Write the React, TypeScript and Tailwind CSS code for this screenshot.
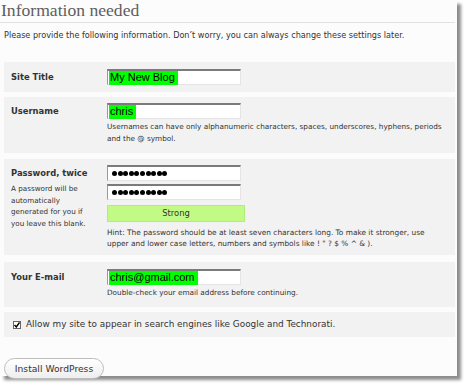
import React from "react";

const FONT = { fontFamily: '"DejaVu Sans", Verdana, sans-serif' };
const ARIAL = { fontFamily: '"Liberation Sans", Arial, sans-serif' };

function TextInput({ value, children }: { value?: string; children?: React.ReactNode }) {
    return (
        <div
            className="w-[134px] h-[16px] bg-white border-t-2 border-l border-t-[#7b7b7b] border-l-[#9a9a9a] border-b border-r border-b-[#e4e4e4] border-r-[#e4e4e4] flex items-center pl-[1px] text-[11px] text-black leading-none"
            style={ARIAL}
        >
            {value ? <span className="bg-[#00ff00] h-[14px] flex items-center pl-[1px] pr-[3px]">{value}</span> : children}
        </div>
    );
}

function Dots() {
    return (
        <div className="flex gap-[0.6px] pl-[3px]">
            {Array.from({ length: 10 }).map((_, i) => (
                <span key={i} className="w-[5px] h-[5px] rounded-full bg-black" />
            ))}
        </div>
    );
}

export default function App() {
    return (
        <div className="min-h-screen bg-white" style={FONT}>
            <div className="w-[457px] h-[376px] bg-[#fcfcfc] shadow-[4px_4px_3px_rgba(0,0,0,0.45)] relative">
                <h1
                    className="text-[17.6px] leading-[18px] text-[#5e5e5e] pt-[1px] pl-[1px]"
                    style={{ fontFamily: '"Liberation Serif", "Times New Roman", serif' }}
                >
                    Information needed
                </h1>
                <div className="mt-[3px] mr-[2px] border-b border-[#e2e2e2]" />
                <p className="text-[8.15px] leading-[12px] text-[#333] pl-[4px] mt-[6px]">
                    Please provide the following information. Don’t worry, you can always change these settings later.
                </p>

                <div className="mt-[21px] px-[4px] pr-[2px] flex flex-col gap-[5px] text-[#333]">
                    <div className="flex bg-[#f2f2f2] pt-[7px] pb-[7px]">
                        <div className="w-[103px] pl-[7px] text-[8.4px] font-bold leading-[16px]">Site Title</div>
                        <TextInput value="My New Blog" />
                    </div>

                    <div className="flex bg-[#f2f2f2] pt-[6px] pb-[8px]">
                        <div className="w-[103px] pl-[7px] text-[8.4px] font-bold leading-[16px]">Username</div>
                        <div>
                            <TextInput value="chris" />
                            <p className="mt-[2px] text-[7.3px] leading-[12px] whitespace-nowrap">
                                Usernames can have only alphanumeric characters, spaces, underscores, hyphens, periods
                                <br />
                                and the @ symbol.
                            </p>
                        </div>
                    </div>

                    <div className="flex bg-[#f2f2f2] pt-[6px] pb-[6px] mt-[1px]">
                        <div className="w-[103px] pl-[7px]">
                            <div className="text-[8.4px] font-bold leading-[16px]">Password, twice</div>
                            <p className="text-[7.2px] leading-[11.7px] mt-[2px]">
                                A password will be
                                <br />
                                automatically
                                <br />
                                generated for you if
                                <br />
                                you leave this blank.
                            </p>
                        </div>
                        <div>
                            <TextInput>
                                <Dots />
                            </TextInput>
                            <div className="mt-[3px]">
                                <TextInput>
                                    <Dots />
                                </TextInput>
                            </div>
                            <div className="mt-[5px] w-[138px] h-[17px] bg-[#c1fb86] border border-[#b0ee78] flex items-center justify-center text-[8.4px]">
                                Strong
                            </div>
                            <p className="mt-[5px] text-[7.4px] leading-[11px] whitespace-nowrap">
                                Hint: The password should be at least seven characters long. To make it stronger, use
                                <br />
                                upper and lower case letters, numbers and symbols like ! " ? $ % ^ &amp; ).
                            </p>
                        </div>
                    </div>

                    <div className="flex bg-[#f2f2f2] pt-[7px] pb-[8px] mt-[2px]">
                        <div className="w-[103px] pl-[7px] text-[8.4px] font-bold leading-[16px]">Your E-mail</div>
                        <div>
                            <TextInput value="chris@gmail.com" />
                            <p className="mt-[2px] text-[7.3px] leading-[12px]">
                                Double-check your email address before continuing.
                            </p>
                        </div>
                    </div>

                    <div className="flex items-center bg-[#f2f2f2] h-[25px] pl-[9px] gap-[5px] text-[8.9px]">
                        <span className="w-[8px] h-[8px] bg-white border border-[#666] flex items-center justify-center">
                            <svg width="6" height="6" viewBox="0 0 6 6">
                                <path d="M0.5 3 L2.3 5 L5.5 0.5" stroke="#000" strokeWidth="1.4" fill="none" />
                            </svg>
                        </span>
                        <span>Allow my site to appear in search engines like Google and Technorati.</span>
                    </div>
                </div>

                <div className="pl-[4px] mt-[18px]">
                    <button className="w-[100px] h-[21px] rounded-full border border-[#bdbdbd] bg-gradient-to-b from-white to-[#eeeeee] text-[9.2px] text-[#333]">
                        Install WordPress
                    </button>
                </div>
            </div>
        </div>
    );
}
